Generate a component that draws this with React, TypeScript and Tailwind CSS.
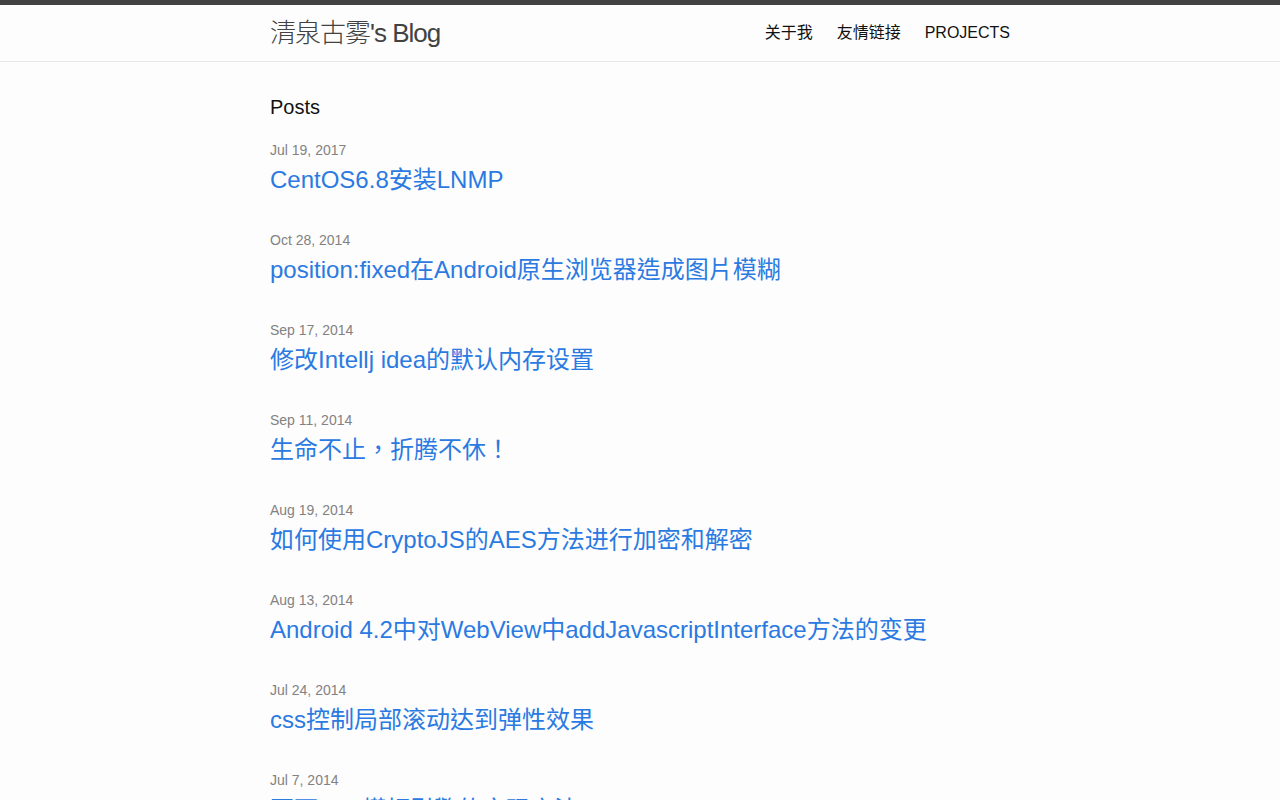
import React from 'react';

const posts = [
    { date: 'Jul 19, 2017', title: 'CentOS6.8安装LNMP' },
    { date: 'Oct 28, 2014', title: 'position:fixed在Android原生浏览器造成图片模糊' },
    { date: 'Sep 17, 2014', title: '修改Intellj idea的默认内存设置' },
    { date: 'Sep 11, 2014', title: '生命不止，折腾不休！' },
    { date: 'Aug 19, 2014', title: '如何使用CryptoJS的AES方法进行加密和解密' },
    { date: 'Aug 13, 2014', title: 'Android 4.2中对WebView中addJavascriptInterface方法的变更' },
    { date: 'Jul 24, 2014', title: 'css控制局部滚动达到弹性效果' },
    { date: 'Jul 7, 2014', title: '页面ajax模板引擎的实现方法' },
];

const font = { fontFamily: '"Liberation Sans", "Noto Sans CJK TC", sans-serif' };

export default function App() {
    return (
        <div className="h-[800px] overflow-hidden bg-[#fdfdfd] text-[#111] text-[16px] leading-[1.5]" style={font}>
            <header className="border-t-[5px] border-t-[#424242] border-b border-b-[#e8e8e8] min-h-[56px]">
                <div className="max-w-[800px] mx-auto px-[30px] flex justify-between items-center">
                    <a className="text-[26px] font-light leading-[56px] tracking-[-1px] text-[#424242]">清泉古雾's Blog</a>
                    <nav className="flex gap-[24px] leading-[56px] text-[#111]">
                        <a>关于我</a>
                        <a>友情链接</a>
                        <a>PROJECTS</a>
                    </nav>
                </div>
            </header>

            <main className="py-[30px]">
                <div className="max-w-[800px] mx-auto px-[30px]">
                    <h1 className="text-[20px] leading-[30px] mb-[18px]">Posts</h1>
                    <ul>
                        {posts.map((p) => (
                            <li key={p.date + p.title} className="mb-[32px]">
                                <span className="block text-[14px] leading-[21px] text-[#828282]">{p.date}</span>
                                <h2 className="text-[24px] leading-[36px] mt-[1px] text-[#2a7ae2]">
                                    <a>{p.title}</a>
                                </h2>
                            </li>
                        ))}
                    </ul>
                </div>
            </main>
        </div>
    );
}
